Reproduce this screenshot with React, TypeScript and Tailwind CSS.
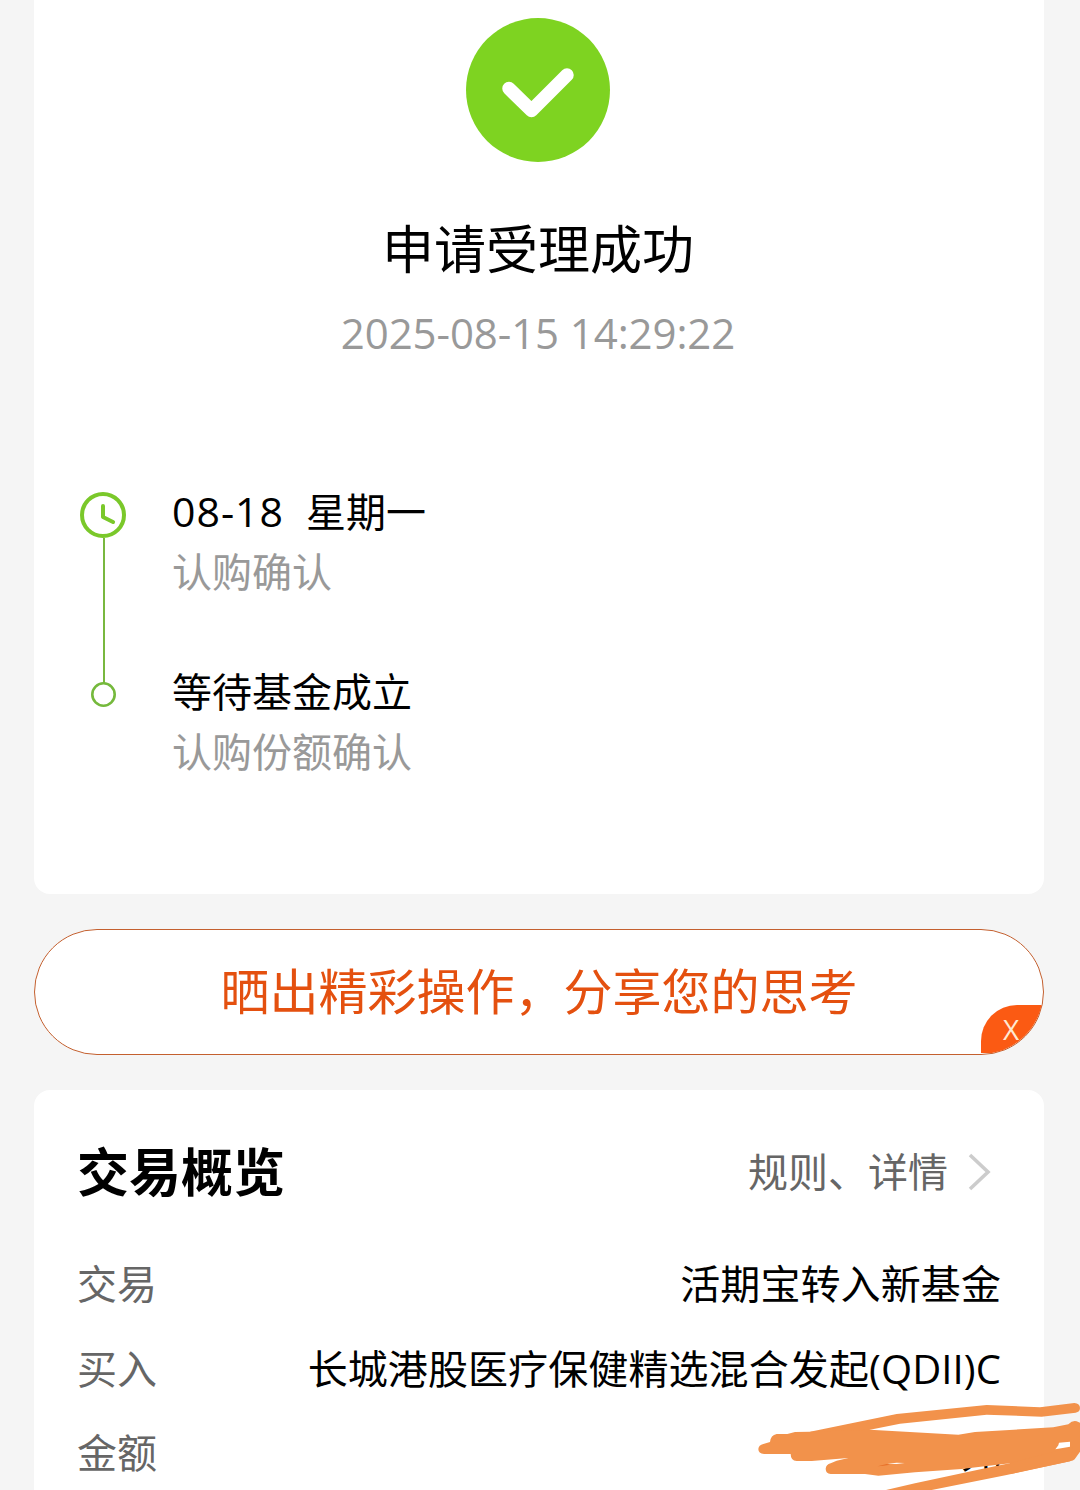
import type { ReactNode } from "react";

type StepProps = {
  title: ReactNode;
  note: string;
};

const steps: StepProps[] = [
  {
    title: (
      <>
        <span className="text-[41px] leading-[58px] tracking-[1px]">08-18</span>
        <span className="ml-[22px]">星期一</span>
      </>
    ),
    note: "认购确认",
  },
  { title: "等待基金成立", note: "认购份额确认" },
];

const rows = [
  { label: "交易", value: "活期宝转入新基金" },
  { label: "买入", value: "长城港股医疗保健精选混合发起(QDII)C" },
  { label: "金额", value: "元" },
];

const SuccessIcon = () => (
  <svg className="mr-0.5 h-36 w-36" viewBox="0 0 144 144" fill="none">
    <circle cx="72" cy="72" r="72" fill="#7ed321" />
    <path
      d="M43 70.5 65.5 92.5 101 57"
      stroke="#fff"
      strokeWidth="13.5"
      strokeLinecap="round"
      strokeLinejoin="round"
    />
  </svg>
);

const TimelineRail = () => (
  <svg className="h-[216px] w-[46px] shrink-0" viewBox="0 0 46 216" fill="none">
    <circle cx="23" cy="23" r="21" stroke="#7ac82a" strokeWidth="4" />
    <path
      d="M23 14v11l10 5"
      stroke="#7ac82a"
      strokeWidth="4"
      strokeLinecap="round"
      strokeLinejoin="round"
    />
    <path d="M24 46v145" stroke="#79b83f" strokeWidth="2" />
    <circle cx="23.5" cy="202.5" r="11.2" stroke="#75b93c" strokeWidth="2.6" />
  </svg>
);

const Step = ({ title, note }: StepProps) => (
  <div className="text-[40px] leading-[60px]">
    <p className="flex text-black">{title}</p>
    <p className="text-[#999]">{note}</p>
  </div>
);

const Scribble = () => (
  <svg
    className="absolute bottom-0 right-0 h-[110px] w-[340px]"
    viewBox="0 0 1020 330"
    fill="#f2924b"
  >
    {/* upper stroke */}
    <path d="M210 155 470 102 740 75 900 82 1003 69Q1020 70 1020 84 1020 96 1007 98L905 110 740 104 480 131 390 149 300 190Z" />
    {/* filled middle */}
    <path d="M70 192 90 186Q92 165 110 162L142 162 165 156 210 155 390 149 655 164 705 156 940 142 985 133Q998 120 1010 124L1020 128V215L1004 238Q1000 243 990 244L812 282 810 250 665 267 525 277 415 287 375 282H272Q257 280 257 266 258 254 272 250L290 242 325 234 215 243H170Q152 242 152 222H72Q55 220 55 207 56 195 70 192Z" />
    {/* lower stroke */}
    <path d="M438 330 525 310 725 267 812 249 1000 200 990 244 800 285 575 330Z" />
    <path d="M957 188 990 185V200L946 208 955 196Z" fill="#fff" />
    <path d="M413 259 440 252 450 254 430 257Z" fill="#e76f28" />
    <path d="M442 251 470 248 494 249 470 252Z" fill="#fff" />
  </svg>
);

export default function App() {
  return (
    <div className="relative h-[1490px] w-[1080px] overflow-hidden bg-[#f5f5f5] pl-[34px] pr-9 font-['Open_Sans','Noto_Sans_CJK_SC',sans-serif]">
      <section className="h-[894px] rounded-b-2xl bg-white pt-[18px]">
        <div className="flex flex-col items-center">
          <SuccessIcon />
          <h1 className="mr-0.5 mt-[49px] text-[52px] leading-[76px] text-black">
            申请受理成功
          </h1>
          <p className="mt-4 mr-0.5 text-[42px] leading-[60px] tracking-[-0.1px] text-[#999]">
            2025-08-15 14:29:22
          </p>
        </div>
        <div className="mt-[119px] flex pl-[46px]">
          <div className="pt-2.5">
            <TimelineRail />
          </div>
          <div className="ml-[46px] flex flex-col gap-[60px]">
            {steps.map((step) => (
              <Step key={step.note} {...step} />
            ))}
          </div>
        </div>
      </section>

      <section className="relative mt-[35px] flex h-[126px] items-center justify-center overflow-hidden rounded-full border-[1.5px] border-[#c4602f] bg-white">
        <p className="pb-[3px] text-[49px] leading-[72px] text-[#e4500f]">
          晒出精彩操作，分享您的思考
        </p>
        <button className="absolute bottom-px right-0 h-12 w-[62px] rounded-tl-[36px] bg-[#fb5a13] pr-0.5 text-[28px] leading-12 text-[#ffe9d2]">
          X
        </button>
      </section>

      <section className="mt-[35px] h-[500px] rounded-t-2xl bg-white px-[43px] pt-[45px]">
        <div className="flex items-center justify-between">
          <h2 className="text-[52px] font-bold leading-[74px] text-black">
            交易概览
          </h2>
          <div className="mr-2.5 flex items-center text-[40px] leading-[74px] text-[#666]">
            规则、详情
            <svg className="ml-5 h-[38px] w-[23px]" viewBox="0 0 23 38" fill="none">
              <path d="M2 2 20 19 2 36" stroke="#ccc" strokeWidth="3.6" />
            </svg>
          </div>
        </div>
        <dl className="mt-[33px] text-[40px] leading-[84.7px]">
          {rows.map((row) => (
            <div key={row.label} className="flex justify-between">
              <dt className="text-[#666]">{row.label}</dt>
              <dd className="tracking-[0.1px] text-black">{row.value}</dd>
            </div>
          ))}
        </dl>
      </section>

      <Scribble />
    </div>
  );
}
